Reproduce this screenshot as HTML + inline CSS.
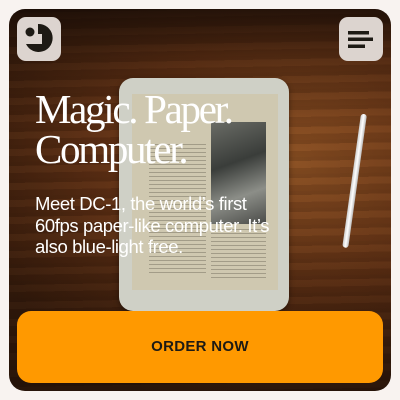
<!DOCTYPE html>
<html><head><style>
*{margin:0;padding:0;box-sizing:border-box}
body{width:400px;height:400px;background:#f8f3f0;position:relative;overflow:hidden;font-family:"Liberation Sans",sans-serif}
.card{position:absolute;left:9px;top:9px;width:382px;height:382px;border-radius:16px;overflow:hidden;
background:
linear-gradient(180deg,rgba(20,10,5,.8) 0%,rgba(20,10,5,.3) 13%,rgba(0,0,0,.05) 30%,rgba(0,0,0,.1) 60%,rgba(20,10,5,.6) 100%),
repeating-linear-gradient(179deg,rgba(0,0,0,.1) 0 4px,rgba(255,200,140,.03) 4px 11px,rgba(0,0,0,.08) 11px 17px),
radial-gradient(ellipse at 75% 40%,#935424 0%,#6c3616 40%,#40200d 80%),#4a250f}
.dev{position:absolute;left:110px;top:69px;width:170px;height:233px;border-radius:14px;background:#cfd0c6;box-shadow:0 2px 6px rgba(0,0,0,.4)}
.scr{position:absolute;left:13px;top:16px;width:146px;height:196px;background:#cfc8b0}
.img{position:absolute;left:79px;top:28px;width:55px;height:102px;background:linear-gradient(160deg,#6a6c66 0%,#3a3d3a 40%,#8c8e88 70%,#4a4b48 100%)}
.lines{position:absolute;left:17px;top:50px;width:57px;height:130px;background:repeating-linear-gradient(180deg,rgba(60,55,45,.3) 0 1px,transparent 1px 4px)}
.lines2{position:absolute;left:79px;top:135px;width:55px;height:50px;background:repeating-linear-gradient(180deg,rgba(60,55,45,.3) 0 1px,transparent 1px 4px)}
.pen{position:absolute;left:352px;top:105px;width:6px;height:135px;background:linear-gradient(90deg,#ccc,#fff,#bbb);border-radius:4px;transform:rotate(8deg);transform-origin:top}
.btn{position:absolute;left:8px;top:302px;width:366px;height:72px;border-radius:14px;background:#ff9900;color:#1d1a14;font-weight:bold;font-size:15px;text-align:center;line-height:72px;letter-spacing:.3px}
.box{position:absolute;top:8px;width:44px;height:44px;border-radius:9px;background:#dcd4cf}
h1{position:absolute;left:26px;top:80px;color:#fff;font-family:"Liberation Serif",serif;font-weight:normal;font-size:41px;line-height:40px;letter-spacing:-2.3px}
p{position:absolute;left:26px;top:184px;color:#fff;font-size:18.5px;line-height:21.5px;letter-spacing:-.4px}
</style></head><body>
<div class="card">
 <div class="dev"><div class="scr"><div class="lines"></div><div class="img"></div><div class="lines2"></div></div></div>
 <div class="pen"></div>
 <div class="box" style="left:8px"><svg width="44" height="44" viewBox="0 0 44 44"><circle cx="13" cy="15" r="4.5" fill="#1d1a14"/><path d="M21 7A14 14 0 1 1 9 27H25V17H21Z" fill="#1d1a14"/></svg></div>
 <div class="box" style="left:330px"><svg width="44" height="44" viewBox="0 0 44 44"><rect x="9" y="14" width="21" height="3.5" fill="#1d1a14"/><rect x="9" y="20.5" width="25" height="3.5" fill="#1d1a14"/><rect x="9" y="27.5" width="17" height="3.5" fill="#1d1a14"/></svg></div>
 <h1>Magic. Paper.<br>Computer.</h1>
 <p>Meet DC-1, the world’s first<br>60fps paper-like computer. It’s<br>also blue-light free.</p>
 <div class="btn">ORDER NOW</div>
</div>
</body></html>
